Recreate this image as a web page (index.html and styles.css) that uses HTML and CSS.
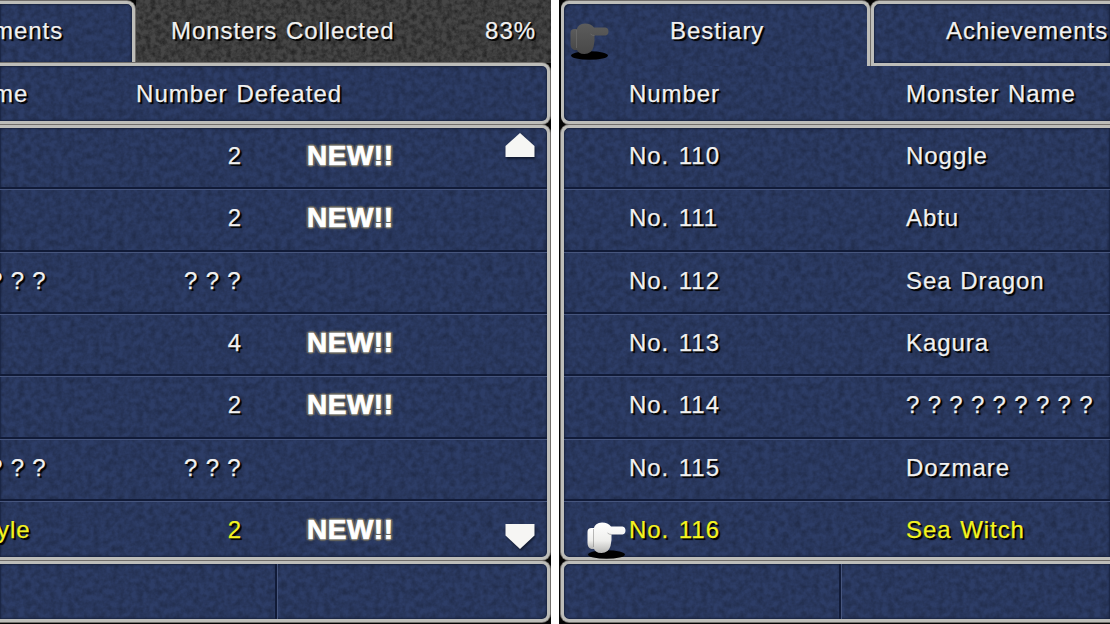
FILE: index.html
```html
<!DOCTYPE html>
<html lang="en">
<head>
  <meta charset="UTF-8" />
  <meta name="viewport" content="width=device-width, initial-scale=1.0"/>
  <title>Bestiary</title>
  <link rel="stylesheet" href="styles.css">
</head>
<body>
  <svg class="defs" width="0" height="0">
    <defs>
      <linearGradient id="glove" x1="0" y1="0" x2="0" y2="1">
        <stop offset="0" stop-color="#ffffff"/>
        <stop offset="0.6" stop-color="#eeeeec"/>
        <stop offset="1" stop-color="#b5b5b3"/>
      </linearGradient>
      <linearGradient id="gloveDim" x1="0" y1="0" x2="0" y2="1">
        <stop offset="0" stop-color="#5c5c5c"/>
        <stop offset="1" stop-color="#484848"/>
      </linearGradient>
      <symbol id="hand" viewBox="0 0 42 40">
        <ellipse cx="21.5" cy="34.5" rx="18.5" ry="4.300" fill="#000"/>
        <path d="M2.500 12Q2.500 8 6.500 8H10V29H6.500Q2.500 28 2.500 23Z"/>
        <path d="M8.500 9Q10 2.500 17 2.500Q23 2.500 26 6.500H37.500Q40.500 7 40.500 10.500Q40.500 14 37.500 14.500H26.500Q27 20 25.500 26Q23.500 33 16.500 33Q9.500 33 8.500 27Z"/>
        <path d="M8.500 9V27M26.500 14.500Q24 14.500 22.500 13" fill="none" stroke="#777" stroke-opacity="0.5" stroke-width="1"/>
      </symbol>
    </defs>
  </svg>

  <section class="screen screen-left">
    <div class="tabs">
      <div class="tab tab-cut"><span>ments</span></div>
      <div class="collected">
        <span>Monsters Collected</span>
        <span class="percent">83%</span>
      </div>
    </div>
    <div class="panel heading row">
      <span class="name name-head">me</span>
      <span class="defeated">Number Defeated</span>
    </div>
    <div class="panel list">
      <div class="row"><span class="name"></span><span class="count">2</span><b class="new">NEW!!</b></div>
      <div class="row"><span class="name"></span><span class="count">2</span><b class="new">NEW!!</b></div>
      <div class="row"><span class="name name-unknown unknown">???</span><span class="count unknown">???</span></div>
      <div class="row"><span class="name"></span><span class="count">4</span><b class="new">NEW!!</b></div>
      <div class="row"><span class="name"></span><span class="count">2</span><b class="new">NEW!!</b></div>
      <div class="row"><span class="name name-unknown unknown">???</span><span class="count unknown">???</span></div>
      <div class="row selected"><span class="name name-selected">yle</span><span class="count">2</span><b class="new">NEW!!</b></div>
      <svg class="arrow arrow-up" viewBox="0 0 30 27"><path d="M15 1L29.500 14V25H0.500V14Z"/></svg>
      <svg class="arrow arrow-down" viewBox="0 0 30 27"><path d="M0.500 1H29.500V12.500L15 26L0.500 12.500Z"/></svg>
    </div>
    <div class="panel footer"><div class="cell"></div><div class="cell"></div></div>
  </section>

  <section class="screen screen-right">
    <div class="tabs">
      <div class="tab tab-active">
        <svg class="hand hand-dim"><use href="#hand"/></svg>
        <span>Bestiary</span>
      </div>
      <div class="tab tab-next"><span>Achievements</span></div>
    </div>
    <div class="panel heading row">
      <span class="number">Number</span>
      <span>Monster Name</span>
    </div>
    <div class="panel list">
      <div class="row"><span class="number">No. 110</span><span>Noggle</span></div>
      <div class="row"><span class="number">No. 111</span><span>Abtu</span></div>
      <div class="row"><span class="number">No. 112</span><span>Sea Dragon</span></div>
      <div class="row"><span class="number">No. 113</span><span>Kagura</span></div>
      <div class="row"><span class="number">No. 114</span><span class="unknown">?????????</span></div>
      <div class="row"><span class="number">No. 115</span><span>Dozmare</span></div>
      <div class="row selected"><span class="number">No. 116</span><span>Sea Witch</span></div>
      <svg class="hand hand-cursor"><use href="#hand"/></svg>
    </div>
    <div class="panel footer"><div class="cell"></div><div class="cell"></div></div>
  </section>
</body>
</html>
```
FILE: styles.css
```css
* {
  margin: 0;
  padding: 0;
  box-sizing: border-box;
}

:root {
  --line: #bdbdb9;
  --edge: #716e6b;
  --blue: #2d3d67;
  --grain: url("data:image/svg+xml,%3Csvg xmlns='http://www.w3.org/2000/svg' width='256' height='256'%3E%3Cfilter id='n' x='0' y='0' width='1' height='1' color-interpolation-filters='sRGB'%3E%3CfeTurbulence type='fractalNoise' baseFrequency='0.16' numOctaves='3' seed='4' stitchTiles='stitch'/%3E%3CfeColorMatrix values='0 0 0 0 0 0 0 0 0 0 0 0 0 0 0 0.45 0 0 0 -0.13'/%3E%3C/filter%3E%3Crect width='256' height='256' filter='url(%23n)'/%3E%3C/svg%3E");
  --stone: url("data:image/svg+xml,%3Csvg xmlns='http://www.w3.org/2000/svg' width='256' height='256'%3E%3Cfilter id='n' x='0' y='0' width='1' height='1' color-interpolation-filters='sRGB'%3E%3CfeTurbulence type='fractalNoise' baseFrequency='0.2' numOctaves='3' seed='4' stitchTiles='stitch'/%3E%3CfeColorMatrix values='0 0 0 0 0 0 0 0 0 0 0 0 0 0 0 0.9 0 0 0 -0.3'/%3E%3C/filter%3E%3Crect width='256' height='256' filter='url(%23n)'/%3E%3C/svg%3E");
}

body {
  display: flex;
  gap: 8px;
  width: 1110px;
  height: 624px;
  overflow: hidden;
  background: #fff;
  color: #f1f1f1;
  font-family: "Liberation Sans", Arial, sans-serif;
  font-size: 24px;
  letter-spacing: 0.95px;
  word-spacing: 1px;
  text-shadow: 1px 1px 1px #000, 2px 2px 1px #000;
  -webkit-text-stroke: 0.25px;
  white-space: nowrap;
}

.defs {
  position: absolute;
}

.screen {
  display: flex;
  flex-direction: column;
  width: 551px;
  height: 624px;
  overflow: hidden;
  background: #050505;
}

.panel,
.tab {
  border: 3px solid var(--line);
  background: var(--grain), var(--blue);
  box-shadow: 0 0 0 1px var(--edge), inset 0 0 2px 1px #18233f;
}

.panel {
  border-radius: 8px;
}

.screen-left .panel {
  margin-right: 1px;
  border-left: none;
  border-radius: 0 8px 8px 0;
}

.screen-right .panel {
  margin-left: 2px;
  border-right: none;
  border-radius: 8px 0 0 8px;
}

/* tabs */
.tabs {
  display: flex;
  flex: none;
  height: 63px;
  line-height: 54px;
}

.tab {
  flex: none;
  margin-top: 1px;
}

.tab-cut {
  width: 135px;
  border-left: none;
  border-bottom: none;
  border-radius: 0 8px 0 0;
}

.tab-cut span {
  margin-left: -7px;
}

.collected {
  display: flex;
  flex: 1;
  margin-left: 1px;
  padding: 4px 0 0 35px;
  background: var(--stone), #464646;
}

.percent {
  margin-left: auto;
  margin-right: 15px;
}

.screen-right .tabs {
  height: 66px;
}

.tab-active {
  display: flex;
  width: 309px;
  margin-left: 2px;
  padding-left: 4px;
  border-bottom: none;
  border-radius: 8px 8px 0 0;
  box-shadow: 0 -1px 0 var(--edge), inset 2px 2px 2px -1px #18233f;
}

.tab-active span {
  margin-left: 60px;
}

.tab-next {
  flex: 1;
  margin-left: 1px;
  padding-left: 72px;
  border-right: none;
  border-radius: 8px 0 0 0;
}

/* column headings */
.heading {
  flex: none;
  height: 61px;
}

.screen-right .heading {
  height: 58px;
  border-top: none;
  border-top-left-radius: 0;
  box-shadow: 0 1px 0 var(--edge), inset 2px -2px 2px -1px #18233f;
}

.row {
  display: flex;
  line-height: 56px;
}

.screen-right .heading.row {
  line-height: 55px;
}

.screen-left .heading {
  line-height: 55px;
}

.defeated {
  letter-spacing: 1.05px;
}

/* monster list */
.list {
  position: relative;
  display: grid;
  grid-template-rows: 61.4px repeat(5, 62.3px) 1fr;
  flex: none;
  height: 435px;
  margin-top: 1px;
}

.list .row + .row {
  border-top: 1px solid #46557d;
  line-height: 55px;
}

.list .row:nth-child(-n+6) {
  box-shadow: inset 0 -2px 0 #111b38;
}

.name {
  flex: none;
  width: 136px;
}

.name-head {
  text-indent: -7px;
}

.name-unknown {
  text-indent: -11px;
}

.name-selected {
  text-indent: -3px;
}

.count {
  width: 106px;
  text-align: right;
}

.count.unknown {
  width: 113px;
}

.new {
  margin-left: 65px;
  color: #fff;
  font-size: 28px;
  letter-spacing: 0.5px;
  -webkit-text-stroke: 0.7px #fff;
  text-shadow: -2px -1px 1px #66655f, 2px -1px 1px #66655f, -2px 1px 1px #66655f, 2px 1px 1px #66655f, 0 2px 1px #66655f, 0 -2px 1px #66655f, 0 0 4px #66655f;
}

.number {
  flex: none;
  width: 277px;
  margin-left: 65px;
}

.list .number {
  word-spacing: 2px;
}

.unknown {
  letter-spacing: 8.3px;
}

.selected {
  color: #f4f421;
}

.arrow {
  position: absolute;
  left: 505px;
  width: 30px;
  height: 27px;
  fill: #f6f6f4;
  filter: drop-shadow(1px 2px 1px #111a30);
}

.arrow-up {
  top: 4px;
}

.arrow-down {
  top: 395px;
}

.hand {
  width: 42px;
  height: 40px;
  fill: url(#glove);
}

.hand-dim {
  margin-top: 17px;
  fill: url(#gloveDim);
}

.hand-cursor {
  position: absolute;
  left: 21px;
  top: 392px;
}

/* bottom bar */
.footer {
  display: flex;
  flex: none;
  height: 61px;
  margin-top: 1px;
}

.cell + .cell {
  border-left: 1px solid #46557d;
}

.cell:first-child {
  width: 277px;
  border-right: 2px solid #111b38;
}
```
